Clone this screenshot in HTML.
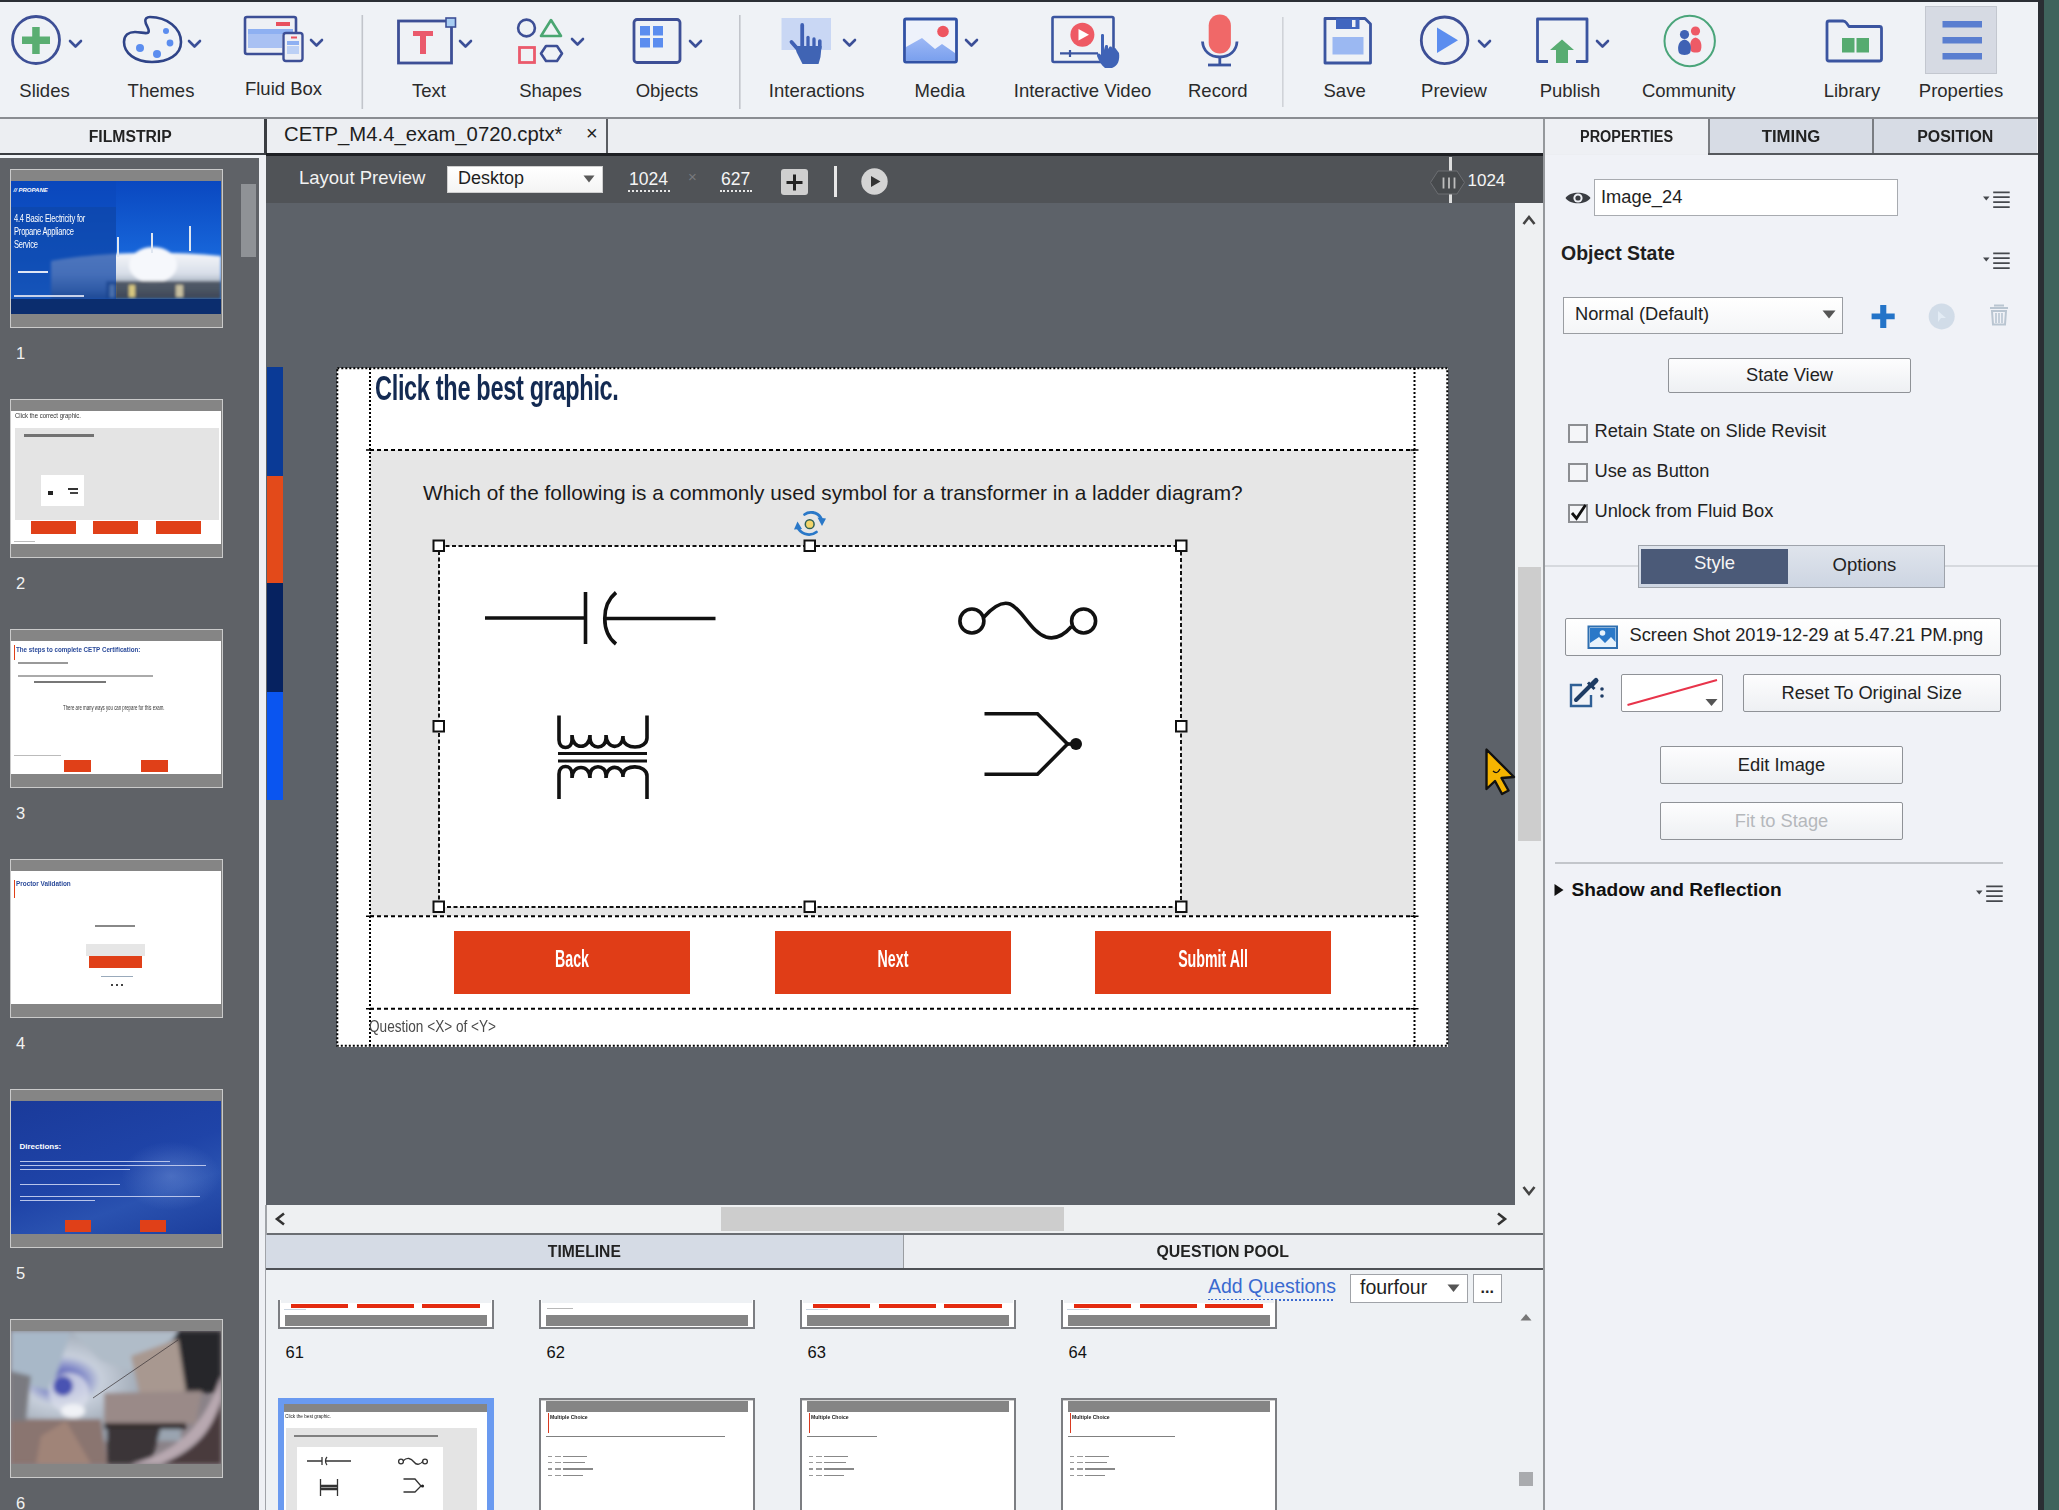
<!DOCTYPE html>
<html><head><meta charset="utf-8">
<style>
*{margin:0;padding:0;box-sizing:border-box}
html,body{width:2059px;height:1510px;overflow:hidden;background:#eff2f6;font-family:"Liberation Sans",sans-serif;color:#222}
.a{position:absolute}
.tl{position:absolute;font-size:18.5px;line-height:1;color:#2a2a2a;white-space:nowrap;transform:translateX(-50%)}
.tab{position:absolute;top:119px;height:35px;font-weight:bold;font-size:16px;color:#222;display:flex;align-items:center;justify-content:center}
.tab span{display:inline-block}
.pt{font-size:18.3px;line-height:1;color:#222;white-space:nowrap}
.btn2{background:linear-gradient(#fdfdfe,#eef0f3);border:1.5px solid #8f9297;border-radius:2px;font-size:18.3px;line-height:1;color:#222;display:flex;align-items:center;justify-content:center;white-space:nowrap}
.cb{width:19.5px;height:19px;border:2px solid #8c8e92;background:#f4f5f8}
</style></head><body>
<!-- top border -->
<div class="a" style="left:0;top:0;width:2059px;height:2px;background:#2b2f35"></div>
<!-- right teal -->
<div class="a" style="left:2038px;top:0;width:6px;height:1510px;background:#2a2e33"></div>
<div class="a" style="left:2044px;top:0;width:15px;height:1510px;background:#3f635c"></div>
<!-- toolbar -->
<div class="a" id="toolbar" style="left:0;top:2px;width:2038px;height:116px;background:#eff2f6"></div>
<div class="a" style="left:0;top:117px;width:2038px;height:2px;background:#8a8d92"></div>
<svg class="a" style="left:0;top:0" width="2038" height="118" viewBox="0 0 2038 118">
<defs>
<linearGradient id="mtn" x1="0" y1="0" x2="0" y2="1"><stop offset="0" stop-color="#9db8f5"/><stop offset="1" stop-color="#7aa0ee"/></linearGradient>
</defs>
<g fill="none" stroke="#3b4f97" stroke-width="2.6" stroke-linecap="round" stroke-linejoin="round">
<!-- chevrons -->
<path d="M70 41 L75.5 46.5 L81 41"/>
<path d="M189 41 L194.5 46.5 L200 41"/>
<path d="M311 40 L316.5 45.5 L322 40"/>
<path d="M460 41 L465.5 46.5 L471 41"/>
<path d="M572 39 L577.5 44.5 L583 39"/>
<path d="M690 41 L695.5 46.5 L701 41"/>
<path d="M844 40 L849.5 45.5 L855 40"/>
<path d="M966 40 L971.5 45.5 L977 40"/>
<path d="M1479 41 L1484.5 46.5 L1490 41"/>
<path d="M1597 41 L1602.5 46.5 L1608 41"/>
</g>
<!-- Slides -->
<circle cx="36" cy="40" r="23.5" fill="none" stroke="#3d4f96" stroke-width="2.8"/>
<rect x="22" y="36.5" width="28" height="7.5" fill="#5aae72"/>
<rect x="32.2" y="27" width="7.5" height="27" fill="#5aae72"/>
<!-- Themes palette -->
<path d="M150 17 C167 17 181 28 181 42 C181 55 168 62 152 62 C135 62 124 53 124 42 C124 35 129 32 135 32 C140 32 144 33.5 147 33 C149.5 32.5 149 30 147.5 27 C146 24 144 21 146 18.5 C147 17.5 148.5 17 150 17 Z" fill="none" stroke="#2f4488" stroke-width="2.6"/>
<circle cx="140" cy="48" r="4" fill="#5b8def"/>
<circle cx="157" cy="54" r="4" fill="#5b8def"/>
<circle cx="170" cy="43" r="3.4" fill="#5b8def"/>
<circle cx="166" cy="31" r="3" fill="#5b8def"/>
<!-- Fluid box -->
<rect x="245" y="17" width="51" height="37" rx="2" fill="#eef0f5" stroke="#3d4f96" stroke-width="2.6"/>
<rect x="248" y="34" width="34" height="14" fill="#a9c1f3"/>
<rect x="248" y="29" width="45" height="5" fill="#8eb0f2"/>
<rect x="276" y="22" width="14" height="4" fill="#e8505e"/>
<rect x="283.5" y="33" width="19" height="28" rx="2.5" fill="#eef0f5" stroke="#3d4f96" stroke-width="2.4"/>
<rect x="287" y="41" width="12" height="4" fill="#8eb0f2"/>
<rect x="287" y="46" width="12" height="8" fill="#bcd0f5"/>
<rect x="291" y="36.5" width="6" height="2" fill="#e8505e"/>
<!-- separators -->
<rect x="361.5" y="15" width="1.6" height="94" fill="#c2c5cb"/>
<rect x="739" y="15" width="1.6" height="94" fill="#c2c5cb"/>
<rect x="1282" y="17" width="1.6" height="90" fill="#d0d3d8"/>
<!-- Text -->
<rect x="398.5" y="21" width="53" height="42" fill="none" stroke="#3d4f96" stroke-width="2.8"/>
<rect x="446" y="18" width="9.5" height="9" fill="#a8cdf2" stroke="#3d4f96" stroke-width="1.6"/>
<path d="M413 31 H433 V36 H426 V54 H420 V36 H413 Z" fill="#ea5a6c"/>
<!-- Shapes -->
<circle cx="526.5" cy="28" r="8.4" fill="none" stroke="#3d4f96" stroke-width="2.6"/>
<path d="M551 20 L561 36 L541 36 Z" fill="none" stroke="#4aa672" stroke-width="2.6" stroke-linejoin="round"/>
<rect x="519.5" y="47.5" width="15" height="15" fill="none" stroke="#ea5a6c" stroke-width="2.8"/>
<path d="M546 46 L557 46 L562 53.5 L557 61 L546 61 L541 53.5 Z" fill="none" stroke="#3d4f96" stroke-width="2.6" stroke-linejoin="round"/>
<!-- Objects -->
<rect x="634" y="19.5" width="46" height="43" rx="3" fill="none" stroke="#3d4f96" stroke-width="2.8"/>
<rect x="640" y="26" width="10" height="9.5" fill="#5b8def"/>
<rect x="653" y="26" width="10" height="9.5" fill="#5b8def"/>
<rect x="640" y="38" width="10" height="9.5" fill="#5b8def"/>
<rect x="653" y="38" width="10" height="9.5" fill="#5b8def"/>
<!-- Interactions -->
<rect x="781.5" y="18" width="49.5" height="32" fill="#c9d7f4"/>
<g stroke="#3f60b4" stroke-linecap="round" fill="none"><path d="M802.2 25 V47" stroke-width="3.8"/><path d="M808 37.5 V47" stroke-width="3.3"/><path d="M814 39 V47" stroke-width="3.3"/><path d="M819.8 41 V48" stroke-width="3.6"/><path d="M791.5 42 L798.5 50" stroke-width="3.8"/></g>
<path d="M795.5 46 H821.6 L820.5 57 L818.5 64 H802.5 L796.5 52 Z" fill="#4064b4"/>
<!-- Media -->
<rect x="904.5" y="19" width="52" height="43" rx="1.5" fill="#eef2fb" stroke="#3152a5" stroke-width="2.8"/>
<path d="M906 60.5 L906 47 L922 38 L935 49 L942 44 L955 53 L955 60.5 Z" fill="url(#mtn)"/>
<circle cx="943" cy="31.5" r="5.8" fill="#ee5560"/>
<!-- Interactive video -->
<rect x="1052.5" y="17" width="61" height="45" rx="1.5" fill="none" stroke="#3b55a0" stroke-width="2.6"/>
<circle cx="1082.4" cy="34.7" r="12" fill="#ee5a64"/>
<path d="M1078.5 29 L1089 34.7 L1078.5 40.4 Z" fill="#fff"/>
<path d="M1060 53.4 H1098" stroke="#3b55a0" stroke-width="2.2"/>
<path d="M1070 50 V57" stroke="#3b55a0" stroke-width="2.2"/>
<path d="M1101 35 C1101 33.5 1104 33.5 1104 35 L1104 50 L1105 46 C1105 44.5 1108 44.5 1108 46 L1108 49 L1109 47.5 C1109 46 1112 46 1112 47.5 L1113 49 C1113 47.5 1116 47.5 1116 49 L1119 53 C1120 60 1118 66 1112 68 L1105 68 C1101 65 1099 61 1097 56 C1097 53 1099 53 1101 55 Z" fill="#3f63b6"/>
<!-- Record -->
<rect x="1208.7" y="14.5" width="22.2" height="39" rx="11" fill="#f06868"/>
<path d="M1202.5 41.5 C1203 51 1210 57 1219.8 57 C1229.6 57 1236.5 51 1237 41.5" fill="none" stroke="#3b55a0" stroke-width="2.8"/>
<path d="M1219.8 57 V64" stroke="#3b55a0" stroke-width="2.8"/>
<path d="M1208 65 H1231" stroke="#3b55a0" stroke-width="2.8"/>
<!-- Save -->
<path d="M1325 18.5 H1365 L1370.5 24 V63 H1325 Z" fill="none" stroke="#3b55a0" stroke-width="2.8" stroke-linejoin="round"/>
<rect x="1336" y="18.5" width="23.5" height="10.5" fill="#4166bf"/>
<rect x="1352" y="20" width="3.5" height="7" fill="#eef0f5"/>
<rect x="1332.5" y="37" width="31" height="17.5" fill="#9bb8f2"/>
<!-- Preview -->
<circle cx="1444.6" cy="40.3" r="23.3" fill="none" stroke="#3d4f96" stroke-width="2.8"/>
<path d="M1437 27.5 L1458 40.3 L1437 53 Z" fill="#5b8def"/>
<!-- Publish -->
<path d="M1548 61.5 H1537.5 V19 H1587 V61.5 H1576" fill="none" stroke="#3b55a0" stroke-width="2.8" stroke-linejoin="round"/>
<path d="M1562 39.5 L1574 50 H1568 V63 H1556 V50 H1550 Z" fill="#58ac72"/>
<!-- Community -->
<circle cx="1689.7" cy="41" r="25.2" fill="none" stroke="#4aa57a" stroke-width="2"/>
<circle cx="1695.5" cy="31" r="4.6" fill="#ee5a66"/>
<path d="M1691 51 C1689.5 46 1689.5 39 1695.5 37.5 C1701.5 39 1702.5 46 1700.5 51 C1699 53 1692.5 53 1691 51 Z" fill="#ee5a66"/>
<circle cx="1684.5" cy="34.5" r="4.6" fill="#3f62b4"/>
<path d="M1679 53 C1677 48 1678 41 1684.5 39.5 C1691 41 1692 48 1690 53 C1688 55.5 1681 55.5 1679 53 Z" fill="#3f62b4"/>
<!-- Library -->
<path d="M1829 61 Q1827 61 1827 59 V23 Q1827 21 1829 21 H1843 Q1845 21 1846.5 23 L1849 26.5 H1879.5 Q1881.5 26.5 1881.5 28.5 V59 Q1881.5 61 1879.5 61 Z" fill="none" stroke="#3b55a0" stroke-width="2.8" stroke-linejoin="round"/>
<path d="M1842 38 H1854.5 V52.5 H1842 Z M1856.5 38 H1869 V52.5 H1856.5 Z" fill="#56ab70"/>
<!-- Properties -->
<rect x="1925.5" y="6.5" width="71" height="67" fill="#d6dae3" stroke="#c3c7cf" stroke-width="1"/>
<rect x="1942.5" y="21" width="39.5" height="6.5" fill="#5a7ed0"/>
<rect x="1942.5" y="37" width="39.5" height="6.5" fill="#5a7ed0"/>
<rect x="1942.5" y="53" width="39.5" height="6.5" fill="#5a7ed0"/>
</svg>
<div class="tl" style="left:44.5px;top:82.3px">Slides</div>
<div class="tl" style="left:161px;top:82.3px">Themes</div>
<div class="tl" style="left:283.5px;top:79.5px">Fluid Box</div>
<div class="tl" style="left:429px;top:82.3px">Text</div>
<div class="tl" style="left:550.5px;top:82.3px">Shapes</div>
<div class="tl" style="left:667px;top:82.3px">Objects</div>
<div class="tl" style="left:816.7px;top:82.3px">Interactions</div>
<div class="tl" style="left:939.8px;top:82.3px">Media</div>
<div class="tl" style="left:1082.5px;top:82.3px">Interactive Video</div>
<div class="tl" style="left:1217.8px;top:82.3px">Record</div>
<div class="tl" style="left:1344.6px;top:82.3px">Save</div>
<div class="tl" style="left:1454px;top:82.3px">Preview</div>
<div class="tl" style="left:1570px;top:82.3px">Publish</div>
<div class="tl" style="left:1688.7px;top:82.3px">Community</div>
<div class="tl" style="left:1852px;top:82.3px">Library</div>
<div class="tl" style="left:1961px;top:82.3px">Properties</div>


<!-- tab bar -->
<div class="a" style="left:0;top:119px;width:2038px;height:36px;background:#eceef2"></div>
<div class="tab" style="left:0;width:261px"><span style="transform:scaleX(0.983)">FILMSTRIP</span></div>
<div class="a" style="left:264px;top:119px;width:3px;height:37px;background:#3a3d42"></div>
<div class="a" style="left:266px;top:119px;width:342px;height:36px;border-right:2px solid #5a5d62"></div>
<div class="a" style="left:284px;top:123px;font-size:20.3px;color:#1e1e1e;white-space:nowrap">CETP_M4.4_exam_0720.cptx*</div>
<div class="a" style="left:586px;top:122px;font-size:20px;color:#1e1e1e">×</div>
<div class="a" style="left:0;top:153px;width:266px;height:1.8px;background:#3a3d42"></div>
<div class="a" style="left:266px;top:153px;width:1278px;height:3px;background:#1e2024"></div>
<div class="a" style="left:1543px;top:119px;width:2px;height:1391px;background:#95989c"></div>
<div class="tab" style="left:1545px;width:163px;background:#eef0f4"><span style="transform:scaleX(0.902)">PROPERTIES</span></div>
<div class="tab" style="left:1708px;width:164px;background:#d7dce5;border-left:2px solid #7a7d82"><span style="transform:scaleX(1.046)">TIMING</span></div>
<div class="tab" style="left:1872px;width:165px;background:#d7dce5;border-left:2px solid #7a7d82"><span style="transform:scaleX(0.995)">POSITION</span></div>
<div class="a" style="left:1708px;top:153px;width:330px;height:2px;background:#55585d"></div>

<!-- filmstrip -->
<div class="a" id="film" style="left:0;top:157.5px;width:259px;height:1353px;background:#5f6267"></div>
<div class="a" style="left:259px;top:155px;width:7px;height:1355px;background:#eef0f4"></div>
<!--FILM--><div class="a" style="left:9.5px;top:169px;width:213px;height:159px;border:1.5px solid #cacaca;background:#858585;overflow:hidden">
<div class="a" style="left:0;top:11px;width:210px;height:133px;overflow:hidden"><svg class="a" style="left:0;top:0" width="210" height="133" viewBox="0 0 210 133">
<defs><filter id="bl1"><feGaussianBlur stdDeviation="1.6"/></filter>
<linearGradient id="sky1" x1="0" y1="0" x2="0" y2="1"><stop offset="0" stop-color="#0a48c0"/><stop offset="0.6" stop-color="#1868dc"/><stop offset="1" stop-color="#3a88ee"/></linearGradient>
<linearGradient id="tank1" x1="0" y1="0" x2="0" y2="1"><stop offset="0" stop-color="#f4f6fa"/><stop offset="0.45" stop-color="#d8dee8"/><stop offset="0.8" stop-color="#8a96a8"/><stop offset="1" stop-color="#4a5464"/></linearGradient></defs>
<rect width="210" height="133" fill="url(#sky1)"/>
<g filter="url(#bl1)">
<path d="M40 80 C70 74 140 68 210 75 V118 H40 Z" fill="url(#tank1)"/>
<ellipse cx="142" cy="84" rx="24" ry="18" fill="#f6f8fc"/>
<path d="M95 100 H210 V118 H95 Z" fill="#3a4250" opacity="0.8"/>
<rect x="118" y="104" width="6" height="12" fill="#d8c880"/><rect x="165" y="104" width="7" height="12" fill="#c8c0a0"/>
<rect x="99" y="104" width="4" height="12" fill="#f0e8c0"/>
</g>
<rect x="0" y="26" width="105" height="92" fill="#0d44a6" opacity="0.72"/>
<rect x="0" y="0" width="105" height="26" fill="#0a46b8" opacity="0.5"/>
<rect x="0" y="118" width="210" height="15" fill="#0b2d6e"/>
<rect x="106" y="56" width="2" height="20" fill="#dfe6f0"/><rect x="140" y="52" width="2" height="20" fill="#dfe6f0"/><rect x="178" y="45" width="2" height="25" fill="#dfe6f0"/>
</svg><div class="a" style="left:3px;top:6px;font-size:6px;line-height:1;color:#fff;white-space:nowrap;font-weight:bold;font-style:italic"><b>//</b> PROPANE</div><div class="a" style="left:3px;top:32px;font-size:10.5px;line-height:1;color:#fff;white-space:nowrap;transform:scaleX(0.72);transform-origin:0 0;letter-spacing:-0.3px">4.4 Basic Electricity for</div><div class="a" style="left:3px;top:45px;font-size:10.5px;line-height:1;color:#fff;white-space:nowrap;transform:scaleX(0.72);transform-origin:0 0;letter-spacing:-0.3px">Propane Appliance</div><div class="a" style="left:3px;top:58px;font-size:10.5px;line-height:1;color:#fff;white-space:nowrap;transform:scaleX(0.72);transform-origin:0 0;letter-spacing:-0.3px">Service</div><div class="a" style="left:7px;top:90px;width:30px;height:1.5px;background:#dfe6f5;"></div><div class="a" style="left:3px;top:114px;width:70px;height:1.5px;background:#c8d2ea;"></div></div></div><div class="a" style="left:16px;top:344.5px;font-size:16.5px;line-height:1;color:#f2f2f2">1</div><div class="a" style="left:9.5px;top:399px;width:213px;height:159px;border:1.5px solid #cacaca;background:#858585;overflow:hidden">
<div class="a" style="left:0;top:11px;width:210px;height:133px;overflow:hidden"><div class="a" style="left:0px;top:0px;width:210px;height:133px;background:#fff;"></div><div class="a" style="left:4px;top:1px;font-size:7.5px;line-height:1;color:#333;white-space:nowrap;transform:scaleX(0.8);transform-origin:0 0">Click the correct graphic.</div><div class="a" style="left:4px;top:16.5px;width:204px;height:92px;background:#e4e4e4;"></div><div class="a" style="left:13px;top:23px;width:70px;height:3px;background:#555;opacity:0.8"></div><div class="a" style="left:30.7px;top:63.5px;width:43px;height:31px;background:#fff;"></div><div class="a" style="left:37px;top:80px;width:5px;height:4px;background:#222;"></div><div class="a" style="left:57px;top:77px;width:10px;height:2px;background:#333;"></div><div class="a" style="left:59px;top:81px;width:8px;height:2px;background:#444;"></div><div class="a" style="left:20px;top:110px;width:45px;height:12.5px;background:#e04018;"></div><div class="a" style="left:82.3px;top:110px;width:45px;height:12.5px;background:#e04018;"></div><div class="a" style="left:145px;top:110px;width:45px;height:12.5px;background:#e04018;"></div><div class="a" style="left:3px;top:130px;width:21px;height:1px;background:#bbb;"></div></div></div><div class="a" style="left:16px;top:574.5px;font-size:16.5px;line-height:1;color:#f2f2f2">2</div><div class="a" style="left:9.5px;top:629px;width:213px;height:159px;border:1.5px solid #cacaca;background:#858585;overflow:hidden">
<div class="a" style="left:0;top:11px;width:210px;height:133px;overflow:hidden"><div class="a" style="left:0px;top:0px;width:210px;height:133px;background:#fff;"></div><div class="a" style="left:3px;top:3.5px;width:1.5px;height:15px;background:#e04018;"></div><div class="a" style="left:5px;top:5px;font-size:8px;line-height:1;color:#2a4a9a;white-space:nowrap;transform:scaleX(0.78);transform-origin:0 0;font-weight:bold">The steps to complete CETP Certification:</div><div class="a" style="left:7px;top:21px;width:50px;height:1.6px;background:#999;"></div><div class="a" style="left:7px;top:34px;width:135px;height:1.6px;background:#aaa;"></div><div class="a" style="left:23px;top:40px;width:72px;height:1.6px;background:#777;"></div><div class="a" style="left:52px;top:63px;font-size:7px;line-height:1;color:#333;white-space:nowrap;transform:scaleX(0.62);transform-origin:0 0">There are many ways you can prepare for this exam.</div><div class="a" style="left:3px;top:114px;width:47px;height:1px;background:#bbb;"></div><div class="a" style="left:53px;top:119px;width:27px;height:12px;background:#e04018;"></div><div class="a" style="left:130px;top:119px;width:27px;height:12px;background:#e04018;"></div></div></div><div class="a" style="left:16px;top:804.5px;font-size:16.5px;line-height:1;color:#f2f2f2">3</div><div class="a" style="left:9.5px;top:859px;width:213px;height:159px;border:1.5px solid #cacaca;background:#858585;overflow:hidden">
<div class="a" style="left:0;top:11px;width:210px;height:133px;overflow:hidden"><div class="a" style="left:0px;top:0px;width:210px;height:133px;background:#fff;"></div><div class="a" style="left:3px;top:8.5px;width:1.5px;height:18px;background:#e04018;"></div><div class="a" style="left:5px;top:9px;font-size:8px;line-height:1;color:#2a4a9a;white-space:nowrap;transform:scaleX(0.8);transform-origin:0 0;font-weight:bold">Proctor Validation</div><div class="a" style="left:84px;top:54px;width:40px;height:1.6px;background:#888;"></div><div class="a" style="left:75.4px;top:72.5px;width:59.6px;height:12px;background:#e6e6e6;"></div><div class="a" style="left:78.4px;top:85px;width:53px;height:11.5px;background:#e04018;"></div><div class="a" style="left:90px;top:104.5px;width:32px;height:1px;background:#9ab;"></div><div class="a" style="left:100px;top:113px;width:2px;height:2px;background:#444;"></div><div class="a" style="left:105px;top:113px;width:2px;height:2px;background:#444;"></div><div class="a" style="left:110px;top:113px;width:2px;height:2px;background:#444;"></div></div></div><div class="a" style="left:16px;top:1034.5px;font-size:16.5px;line-height:1;color:#f2f2f2">4</div><div class="a" style="left:9.5px;top:1089px;width:213px;height:159px;border:1.5px solid #cacaca;background:#858585;overflow:hidden">
<div class="a" style="left:0;top:11px;width:210px;height:133px;overflow:hidden"><div class="a" style="left:0px;top:0px;width:210px;height:133px;background:linear-gradient(160deg,#1a3a9a 0%,#1f44a8 50%,#2a52b0 70%,#1c3e9c 100%);"></div><div class="a" style="left:110px;top:40px;width:100px;height:70px;background:radial-gradient(ellipse at 50% 50%,rgba(140,170,230,0.35),transparent 70%);"></div><div class="a" style="left:9px;top:42px;font-size:8px;line-height:1;color:#fff;white-space:nowrap;"><b>Directions:</b></div><div class="a" style="left:9px;top:60px;width:150px;height:1.4px;background:#b8c4ea;"></div><div class="a" style="left:9px;top:64px;width:186px;height:1.4px;background:#b8c4ea;"></div><div class="a" style="left:9px;top:68px;width:110px;height:1.4px;background:#b8c4ea;"></div><div class="a" style="left:9px;top:83px;width:100px;height:1.4px;background:#b8c4ea;"></div><div class="a" style="left:9px;top:95px;width:180px;height:1.4px;background:#b8c4ea;"></div><div class="a" style="left:9px;top:99px;width:75px;height:1.4px;background:#b8c4ea;"></div><div class="a" style="left:54px;top:119px;width:26px;height:12px;background:#e04018;"></div><div class="a" style="left:129px;top:119px;width:26px;height:12px;background:#e04018;"></div></div></div><div class="a" style="left:16px;top:1264.5px;font-size:16.5px;line-height:1;color:#f2f2f2">5</div><div class="a" style="left:9.5px;top:1319px;width:213px;height:159px;border:1.5px solid #cacaca;background:#858585;overflow:hidden">
<div class="a" style="left:0;top:11px;width:210px;height:133px;overflow:hidden"><svg class="a" style="left:0;top:0" width="210" height="133" viewBox="0 0 210 133">
<defs><filter id="bl6" x="-10%" y="-10%" width="120%" height="120%"><feGaussianBlur stdDeviation="2.2"/></filter>
<radialGradient id="sw6" cx="0.3" cy="0.45" r="0.5"><stop offset="0" stop-color="#4a50b0"/><stop offset="0.25" stop-color="#8088c8"/><stop offset="0.45" stop-color="#c8d0dc"/><stop offset="1" stop-color="#9aa4b0"/></radialGradient></defs>
<rect width="210" height="133" fill="#8a8288"/>
<g filter="url(#bl6)">
<rect x="0" y="0" width="170" height="110" fill="url(#sw6)"/>
<path d="M0 0 H60 L40 60 L0 50 Z" fill="#a8b8c8"/>
<path d="M60 0 H170 L120 40 L90 30 Z" fill="#b0bcc8"/>
<circle cx="58" cy="62" r="20" fill="#d8dce8" opacity="0.8"/>
<circle cx="52" cy="55" r="10" fill="#4a52b2"/>
<ellipse cx="62" cy="80" rx="12" ry="7" fill="#f0f2f6"/>
<path d="M167 0 H210 V62 L160 62 L150 30 Z" fill="#26262c"/>
<path d="M120 25 L167 8 L175 60 L130 70 Z" fill="#a89890"/>
<path d="M93 62 L191 60 L185 93 L93 93 Z" fill="#9a8a88"/>
<path d="M93 92 H175 V98 H93 Z" fill="#2a2022"/>
<path d="M96 96 H150 L140 133 H96 Z" fill="#3a3438"/>
<path d="M210 45 C195 90 170 120 120 133 H150 C185 118 205 95 210 70 Z" fill="#b8a8b0"/>
<path d="M210 70 C200 100 185 120 150 133 H210 Z" fill="#4a3a3c"/>
<path d="M0 88 H90 L96 133 H0 Z" fill="#8a7470"/>
<path d="M30 105 L55 90 L80 133 H25 Z" fill="#a08478"/>
<path d="M0 40 L20 45 L15 90 L0 90 Z" fill="#7a7a80"/>
</g>
<path d="M82 67 L167 9" stroke="#3a3436" stroke-width="0.9" fill="none" opacity="0.8"/>
</svg></div></div><div class="a" style="left:16px;top:1494.5px;font-size:16.5px;line-height:1;color:#f2f2f2">6</div><div class="a" style="left:240.5px;top:184px;width:15.5px;height:73px;background:#8f9296"></div><!--/FILM-->

<!-- canvas -->
<div class="a" id="canvas" style="left:266px;top:156px;width:1250px;height:1049px;background:#5d6269"></div>
<div class="a" id="layoutbar" style="left:266px;top:156px;width:1277px;height:47px;background:#505357"></div>
<div class="a" id="vscroll" style="left:1515px;top:203px;width:28px;height:1002px;background:#eef0f2"></div>
<div class="a" id="hscroll" style="left:266px;top:1205px;width:1277px;height:29px;background:#eef0f2"></div>
<!-- layout bar content -->
<div class="a" style="left:299px;top:169px;font-size:18.5px;line-height:1;color:#f2f2f2;white-space:nowrap">Layout Preview</div>
<div class="a" style="left:447px;top:166px;width:156px;height:27px;background:linear-gradient(#ffffff,#f4f4f4);border:1px solid #cfcfcf"></div>
<div class="a" style="left:458px;top:168.5px;font-size:18px;line-height:1;color:#1e1e1e">Desktop</div>
<svg class="a" style="left:583px;top:175px" width="12" height="8"><path d="M0.5 0.5 H11.5 L6 7.5 Z" fill="#5a5a5a"/></svg>
<div class="a" style="left:629px;top:170.5px;font-size:17.5px;line-height:1;color:#f5f5f5">1024</div>
<div class="a" style="left:628px;top:190px;width:42px;border-top:2px dotted #e6e6e6"></div>
<div class="a" style="left:688px;top:169px;font-size:15px;line-height:1;color:#787a7e">×</div>
<div class="a" style="left:721px;top:170.5px;font-size:17.5px;line-height:1;color:#f5f5f5">627</div>
<div class="a" style="left:720px;top:190px;width:32px;border-top:2px dotted #e6e6e6"></div>
<div class="a" style="left:781px;top:168.5px;width:27px;height:26.5px;background:#cfcfcf;border-radius:3px"></div>
<svg class="a" style="left:781px;top:168.5px" width="27" height="27"><path d="M5.5 13.5 H21.5 M13.5 5.5 V21.5" stroke="#222" stroke-width="3"/></svg>
<div class="a" style="left:834px;top:165.5px;width:2.5px;height:31px;background:#e8e8e8"></div>
<svg class="a" style="left:861px;top:168px" width="28" height="28"><circle cx="13.5" cy="13.5" r="13.2" fill="#d4d4d4"/><path d="M10 8 L19.5 13.5 L10 19 Z" fill="#333"/></svg>
<div class="a" style="left:1448.8px;top:156.5px;width:2.8px;height:46.5px;background:#dedede"></div>
<svg class="a" style="left:1429px;top:170px" width="38" height="26"><path d="M1.5 12.5 L9 1 H28 L35.5 12.5 L28 24 H9 Z" fill="#474a4d" stroke="#6c6e72" stroke-width="1"/><path d="M14.5 7.5 V18.5 M20 7.5 V18.5 M25.5 7.5 V18.5" stroke="#bdbdbd" stroke-width="1.8"/></svg>
<div class="a" style="left:1467.5px;top:171.5px;font-size:17px;line-height:1;color:#f5f5f5">1024</div>
<!-- v scrollbar -->
<svg class="a" style="left:1522px;top:214px" width="14" height="12"><path d="M1.5 10 L7 3 L12.5 10" fill="none" stroke="#444" stroke-width="2.6"/></svg>
<div class="a" style="left:1517.5px;top:567px;width:23.5px;height:273.5px;background:#cdcdcd"></div>
<svg class="a" style="left:1522px;top:1185px" width="14" height="12"><path d="M1.5 2 L7 9 L12.5 2" fill="none" stroke="#444" stroke-width="2.6"/></svg>
<!-- h scrollbar -->
<svg class="a" style="left:274px;top:1212px" width="12" height="14"><path d="M10 1.5 L3 7 L10 12.5" fill="none" stroke="#333" stroke-width="2.6"/></svg>
<div class="a" style="left:720.5px;top:1206.5px;width:343px;height:24px;background:#cdcdcd"></div>
<svg class="a" style="left:1496px;top:1212px" width="12" height="14"><path d="M2 1.5 L9 7 L2 12.5" fill="none" stroke="#333" stroke-width="2.6"/></svg>
<!-- color stripe -->
<div class="a" style="left:266.5px;top:367px;width:16px;height:109px;background:#0a3a96"></div>
<div class="a" style="left:266.5px;top:476px;width:16px;height:107px;background:#e34a1a"></div>
<div class="a" style="left:266.5px;top:583px;width:16px;height:109px;background:#062260"></div>
<div class="a" style="left:266.5px;top:692px;width:16px;height:108px;background:#0a55f0"></div>
<!-- slide -->
<div class="a" style="left:336.5px;top:367.5px;width:1111px;height:679px;background:#fff"></div>
<div class="a" style="left:370px;top:450px;width:1044px;height:466px;background:#e6e6e6"></div>
<svg class="a" style="left:0;top:0" width="1516" height="1205" viewBox="0 0 1516 1205">
<g fill="none" stroke="#000" stroke-width="2" stroke-dasharray="2 2">
<rect x="337.3" y="368.3" width="1110" height="677.5"/>
<path d="M370 368 V1046 M1414.5 368 V1046"/>
<path d="M370 450 H1414.5 M370 916.3 H1414.5 M370 1008.8 H1414.5" stroke-dasharray="4 3"/>
</g>
<g stroke="#000" stroke-width="1.6"><path d="M366 450 H374 M366 916.3 H374 M366 1008.8 H374 M1410.5 450 H1418.5 M1410.5 916.3 H1418.5 M1410.5 1008.8 H1418.5"/></g>
</svg>
<div class="a" id="title" style="left:375px;top:370.3px;font-size:35px;line-height:1;color:#132a52;font-weight:bold;white-space:nowrap;transform:scaleX(0.673);transform-origin:0 0;letter-spacing:-0.5px">Click the best graphic.</div>
<div class="a" id="q" style="left:423px;top:482.5px;font-size:20.83px;line-height:1;color:#1a1a1a;white-space:nowrap">Which of the following is a commonly used symbol for a transformer in a ladder diagram?</div>
<!-- image selection -->
<div class="a" style="left:439px;top:546px;width:742px;height:361px;background:#fff"></div>
<svg class="a" style="left:0;top:0" width="1516" height="1205" viewBox="0 0 1516 1205">
<rect x="439" y="546" width="742" height="361" fill="none" stroke="#111" stroke-width="2" stroke-dasharray="4 2.5"/>
<g fill="#fff" stroke="#111" stroke-width="2">
<rect x="433.5" y="540.5" width="10.5" height="10.5"/><rect x="804.5" y="540.5" width="10.5" height="10.5"/><rect x="1176" y="540.5" width="10.5" height="10.5"/>
<rect x="433.5" y="721" width="10.5" height="10.5"/><rect x="1176" y="721" width="10.5" height="10.5"/>
<rect x="433.5" y="901.5" width="10.5" height="10.5"/><rect x="804.5" y="901.5" width="10.5" height="10.5"/><rect x="1176" y="901.5" width="10.5" height="10.5"/>
</g>
<!-- symbols -->
<g fill="none" stroke="#111" stroke-width="3.6">
<path d="M485 618 H585.5 M585.5 592 V644 M616 592.5 C601 605 601 632 616 644 M605.5 618.5 H715.5"/>
<circle cx="971.9" cy="621" r="12"/><circle cx="1083.6" cy="621" r="12"/>
<path d="M984 617 C992 608 1002 601 1010 604 C1022 609 1031 632 1046 637 C1056 640 1065 634 1071.5 626.5"/>
<path d="M559 715.5 V740 C559 750 572 750 572 740 V735 C572 750 590 750 590 735 V738 C590 750 606 750 606 738 V735 C606 750 623 750 623 736 V738 C623 750 647 750 647 738 V715.5"/>
<path d="M558 753.5 H647 M558 761 H647" stroke-width="3"/>
<path d="M559 799 V774 C559 764 572 764 572 774 V778 C572 764 590 764 590 778 V775 C590 764 606 764 606 775 V778 C606 764 623 764 623 777 V775 C623 764 647 764 647 776 V799"/>
<path d="M984.5 713.7 H1037.5 L1067.5 744 L1037.5 774.3 H984.5"/>
</g>
<circle cx="1076" cy="744" r="6" fill="#111"/>
<path d="M1067 744 H1076" stroke="#111" stroke-width="3.6"/>
<!-- rotate icon -->
<g fill="none" stroke="#2a78c8" stroke-width="2.8" stroke-linecap="round">
<path d="M804.5 514.5 C809 511 817 511.5 821 518"/>
<path d="M816.5 532 C811.5 536 803 535.5 798.5 529"/>
</g>
<path d="M817.5 517.5 L826 518.5 L822 526 Z M794 529.5 L802 529 L797.5 521.5 Z" fill="#2a78c8"/>
<circle cx="809.7" cy="524.2" r="4.4" fill="#f3d56a" stroke="#2d5f55" stroke-width="1.5"/>
</svg>
<!-- buttons -->
<div class="a btn" style="left:453.8px;top:931.3px;width:236px;height:63.2px;background:#e03d17"></div>
<div class="a btn" style="left:774.5px;top:931.3px;width:236px;height:63.2px;background:#e03d17"></div>
<div class="a btn" style="left:1095px;top:931.3px;width:236px;height:63.2px;background:#e03d17"></div>
<div class="a" style="left:453.8px;top:948.3px;width:236px;text-align:center;font-size:23.3px;line-height:1;color:#fff;font-weight:bold;transform:scaleX(0.61);transform-origin:50% 0">Back</div>
<div class="a" style="left:774.5px;top:948.3px;width:236px;text-align:center;font-size:23.3px;line-height:1;color:#fff;font-weight:bold;transform:scaleX(0.61);transform-origin:50% 0">Next</div>
<div class="a" style="left:1095px;top:948.3px;width:236px;text-align:center;font-size:23.3px;line-height:1;color:#fff;font-weight:bold;transform:scaleX(0.61);transform-origin:50% 0">Submit All</div>
<div class="a" style="left:369px;top:1019px;font-size:16px;line-height:1;color:#4a4a4a;white-space:nowrap;transform:scaleX(0.85);transform-origin:0 0">Question &lt;X&gt; of &lt;Y&gt;</div>
<!-- cursor -->
<svg class="a" style="left:1480px;top:745px" width="40" height="55"><path d="M6.5 4.5 L6.5 44 L15 36 L22 49 L28.5 45.5 L21.5 33 L34 32 Z" fill="#f5b400" stroke="#111" stroke-width="2.4" stroke-linejoin="round"/><path d="M13 26 Q17 30 20 24" fill="none" stroke="#111" stroke-width="1.3"/></svg>


<!-- bottom tabs -->
<div class="a" style="left:266px;top:1233px;width:1277px;height:2px;background:#6a6d72"></div><div class="a" style="left:265px;top:1205px;width:1.5px;height:305px;background:#a0a3a8"></div>
<div class="a" style="left:266px;top:1235px;width:637px;height:34px;background:#d5dbe5"></div>
<div class="a" style="left:903px;top:1235px;width:640px;height:34px;background:#eceef2;border-left:1px solid #9a9da2"></div>
<div class="a" style="left:266px;top:1268px;width:1277px;height:2px;background:#4e5156"></div>
<div class="tab" style="left:266px;top:1235px;height:34px;width:637px;font-size:16px"><span style="transform:scaleX(0.977)">TIMELINE</span></div>
<div class="tab" style="left:903px;top:1235px;height:34px;width:640px;font-size:16px"><span style="transform:scaleX(0.993)">QUESTION POOL</span></div>
<div class="a" id="qpool" style="left:266px;top:1270px;width:1277px;height:240px;background:#eef1f4"></div>
<!--QP--><div class="a" style="left:1208px;top:1277px;font-size:19.5px;line-height:1;color:#3a6ad0;white-space:nowrap;">Add Questions</div><div class="a" style="left:1208px;top:1298.5px;width:125px;border-top:2px dotted #3a6ad0"></div><div class="a" style="left:1349.5px;top:1274px;width:118.5px;height:29px;background:#fff;border:1.5px solid #a0a3a8"></div><div class="a" style="left:1360px;top:1278px;font-size:19.5px;line-height:1;color:#222;white-space:nowrap;">fourfour</div><svg class="a" style="left:1447px;top:1284px" width="13" height="9"><path d="M0.5 0.5 H12.5 L6.5 8 Z" fill="#555"/></svg><div class="a" style="left:1473px;top:1274px;width:28.5px;height:29px;background:#fff;border:1.5px solid #a0a3a8"></div><div class="a" style="left:1473px;top:1280px;width:28.5px;text-align:center;font-size:16px;line-height:1;color:#222;font-weight:bold">...</div><svg class="a" style="left:1520px;top:1313px" width="12" height="8"><path d="M0.5 7.5 H11.5 L6 1 Z" fill="#777"/></svg><div class="a" style="left:1518.6px;top:1471.5px;width:14.5px;height:14.5px;background:#a9abae;"></div><div class="a" style="left:277.5px;top:1300px;width:216px;height:29px;border:2px solid #7c7e82;border-top:none;background:#fff;overflow:hidden"><div class="a" style="left:5px;top:14.5px;width:202px;height:11px;background:#858585;"></div><div class="a" style="left:11px;top:3.5px;width:57.5px;height:4px;background:#e42b10;"></div><div class="a" style="left:77px;top:3.5px;width:57.5px;height:4px;background:#e42b10;"></div><div class="a" style="left:142.5px;top:3.5px;width:57.5px;height:4px;background:#e42b10;"></div><div class="a" style="left:4px;top:8.5px;width:22px;height:1px;background:#c9d4e0;"></div></div><div class="a" style="left:280.5px;top:1300px;width:210px;height:3px;background:#eef1f4;"></div><div class="a" style="left:285.5px;top:1344px;font-size:16.5px;line-height:1;color:#111;white-space:nowrap;">61</div><div class="a" style="left:538.5px;top:1300px;width:216px;height:29px;border:2px solid #7c7e82;border-top:none;background:#fff;overflow:hidden"><div class="a" style="left:5px;top:14.5px;width:202px;height:11px;background:#858585;"></div><div class="a" style="left:6px;top:8px;width:26px;height:1.2px;background:#b8b8b8;"></div></div><div class="a" style="left:541.5px;top:1300px;width:210px;height:3px;background:#eef1f4;"></div><div class="a" style="left:546.5px;top:1344px;font-size:16.5px;line-height:1;color:#111;white-space:nowrap;">62</div><div class="a" style="left:799.5px;top:1300px;width:216px;height:29px;border:2px solid #7c7e82;border-top:none;background:#fff;overflow:hidden"><div class="a" style="left:5px;top:14.5px;width:202px;height:11px;background:#858585;"></div><div class="a" style="left:11px;top:3.5px;width:57.5px;height:4px;background:#e42b10;"></div><div class="a" style="left:77px;top:3.5px;width:57.5px;height:4px;background:#e42b10;"></div><div class="a" style="left:142.5px;top:3.5px;width:57.5px;height:4px;background:#e42b10;"></div><div class="a" style="left:4px;top:8.5px;width:22px;height:1px;background:#c9d4e0;"></div></div><div class="a" style="left:802.5px;top:1300px;width:210px;height:3px;background:#eef1f4;"></div><div class="a" style="left:807.5px;top:1344px;font-size:16.5px;line-height:1;color:#111;white-space:nowrap;">63</div><div class="a" style="left:1060.5px;top:1300px;width:216px;height:29px;border:2px solid #7c7e82;border-top:none;background:#fff;overflow:hidden"><div class="a" style="left:5px;top:14.5px;width:202px;height:11px;background:#858585;"></div><div class="a" style="left:11px;top:3.5px;width:57.5px;height:4px;background:#e42b10;"></div><div class="a" style="left:77px;top:3.5px;width:57.5px;height:4px;background:#e42b10;"></div><div class="a" style="left:142.5px;top:3.5px;width:57.5px;height:4px;background:#e42b10;"></div><div class="a" style="left:4px;top:8.5px;width:22px;height:1px;background:#c9d4e0;"></div></div><div class="a" style="left:1063.5px;top:1300px;width:210px;height:3px;background:#eef1f4;"></div><div class="a" style="left:1068.5px;top:1344px;font-size:16.5px;line-height:1;color:#111;white-space:nowrap;">64</div><div class="a" style="left:277.5px;top:1397.7px;width:216px;height:120px;background:#6a9af0;overflow:hidden"><div class="a" style="left:6px;top:6.5px;width:203px;height:7.5px;background:#858585;"></div><div class="a" style="left:6px;top:14px;width:203px;height:110px;background:#fff;"></div><div class="a" style="left:7px;top:16.5px;font-size:5.5px;line-height:1;color:#222;white-space:nowrap;transform:scaleX(0.85);transform-origin:0 0">Click the best graphic.</div><div class="a" style="left:8px;top:30.5px;width:191px;height:90px;background:#e4e4e4;"></div><div class="a" style="left:16px;top:37.5px;width:144px;height:1.8px;background:#666;opacity:0.8"></div><div class="a" style="left:19px;top:49.5px;width:146px;height:80px;background:#fff;"></div><svg class="a" style="left:0;top:0" width="216" height="120"><g fill="none" stroke="#333" stroke-width="1.3">
<path d="M29 63 H44 M44 59 V67 M49 59 C47 61 47 65 49 67 M48 63 H73"/>
<circle cx="123" cy="63.5" r="2.4"/><circle cx="147" cy="63.5" r="2.4"/><path d="M125 63 C129 59 133 60 136 64 C139 68 143 66 145 63"/>
<path d="M125.5 81 H137 L143 88 L137 94 H125.5"/>
<path d="M42.5 81 V98 M59.5 81 V98" /><path d="M43 88 H59 M43 91 H59" stroke-width="2.6"/></g>
<circle cx="144.5" cy="88" r="1.6" fill="#222"/></svg></div><div class="a" style="left:538.5px;top:1397.7px;width:216px;height:120px;border:2px solid #7c7e82;background:#fff;overflow:hidden"><div class="a" style="left:0px;top:0px;width:212px;height:1.2px;background:#d0d0d0;"></div><div class="a" style="left:5px;top:1.5px;width:202px;height:11px;background:#858585;"></div><div class="a" style="left:7px;top:13px;width:1.6px;height:20px;background:#d83a20;"></div><div class="a" style="left:9.5px;top:14.5px;font-size:6px;line-height:1;color:#222;white-space:nowrap;transform:scaleX(0.85);transform-origin:0 0"><b>Multiple Choice</b></div><div class="a" style="left:5.2999999999999545px;top:36px;width:179.70000000000005px;height:1.5px;background:#555;opacity:0.75"></div><div class="a" style="left:7px;top:56.0px;width:4px;height:1.2px;background:#999;"></div><div class="a" style="left:14px;top:56.0px;width:6px;height:1.2px;background:#999;"></div><div class="a" style="left:22px;top:56.0px;width:24px;height:1.2px;background:#888;"></div><div class="a" style="left:7px;top:62.4px;width:4px;height:1.2px;background:#999;"></div><div class="a" style="left:14px;top:62.4px;width:6px;height:1.2px;background:#999;"></div><div class="a" style="left:22px;top:62.4px;width:22px;height:1.2px;background:#888;"></div><div class="a" style="left:7px;top:68.8px;width:4px;height:1.2px;background:#999;"></div><div class="a" style="left:14px;top:68.8px;width:6px;height:1.2px;background:#999;"></div><div class="a" style="left:22px;top:68.8px;width:30px;height:1.2px;background:#888;"></div><div class="a" style="left:7px;top:75.2px;width:4px;height:1.2px;background:#999;"></div><div class="a" style="left:14px;top:75.2px;width:6px;height:1.2px;background:#999;"></div><div class="a" style="left:22px;top:75.2px;width:20px;height:1.2px;background:#888;"></div></div><div class="a" style="left:799.5px;top:1397.7px;width:216px;height:120px;border:2px solid #7c7e82;background:#fff;overflow:hidden"><div class="a" style="left:0px;top:0px;width:212px;height:1.2px;background:#d0d0d0;"></div><div class="a" style="left:5px;top:1.5px;width:202px;height:11px;background:#858585;"></div><div class="a" style="left:7px;top:13px;width:1.6px;height:20px;background:#d83a20;"></div><div class="a" style="left:9.5px;top:14.5px;font-size:6px;line-height:1;color:#222;white-space:nowrap;transform:scaleX(0.85);transform-origin:0 0"><b>Multiple Choice</b></div><div class="a" style="left:5.2999999999999545px;top:36px;width:70.5px;height:1.5px;background:#555;opacity:0.75"></div><div class="a" style="left:7px;top:56.0px;width:4px;height:1.2px;background:#999;"></div><div class="a" style="left:14px;top:56.0px;width:6px;height:1.2px;background:#999;"></div><div class="a" style="left:22px;top:56.0px;width:24px;height:1.2px;background:#888;"></div><div class="a" style="left:7px;top:62.4px;width:4px;height:1.2px;background:#999;"></div><div class="a" style="left:14px;top:62.4px;width:6px;height:1.2px;background:#999;"></div><div class="a" style="left:22px;top:62.4px;width:22px;height:1.2px;background:#888;"></div><div class="a" style="left:7px;top:68.8px;width:4px;height:1.2px;background:#999;"></div><div class="a" style="left:14px;top:68.8px;width:6px;height:1.2px;background:#999;"></div><div class="a" style="left:22px;top:68.8px;width:30px;height:1.2px;background:#888;"></div><div class="a" style="left:7px;top:75.2px;width:4px;height:1.2px;background:#999;"></div><div class="a" style="left:14px;top:75.2px;width:6px;height:1.2px;background:#999;"></div><div class="a" style="left:22px;top:75.2px;width:20px;height:1.2px;background:#888;"></div></div><div class="a" style="left:1060.5px;top:1397.7px;width:216px;height:120px;border:2px solid #7c7e82;background:#fff;overflow:hidden"><div class="a" style="left:0px;top:0px;width:212px;height:1.2px;background:#d0d0d0;"></div><div class="a" style="left:5px;top:1.5px;width:202px;height:11px;background:#858585;"></div><div class="a" style="left:7px;top:13px;width:1.6px;height:20px;background:#d83a20;"></div><div class="a" style="left:9.5px;top:14.5px;font-size:6px;line-height:1;color:#222;white-space:nowrap;transform:scaleX(0.85);transform-origin:0 0"><b>Multiple Choice</b></div><div class="a" style="left:5.5px;top:36px;width:107px;height:1.5px;background:#555;opacity:0.75"></div><div class="a" style="left:7px;top:56.0px;width:4px;height:1.2px;background:#999;"></div><div class="a" style="left:14px;top:56.0px;width:6px;height:1.2px;background:#999;"></div><div class="a" style="left:22px;top:56.0px;width:24px;height:1.2px;background:#888;"></div><div class="a" style="left:7px;top:62.4px;width:4px;height:1.2px;background:#999;"></div><div class="a" style="left:14px;top:62.4px;width:6px;height:1.2px;background:#999;"></div><div class="a" style="left:22px;top:62.4px;width:22px;height:1.2px;background:#888;"></div><div class="a" style="left:7px;top:68.8px;width:4px;height:1.2px;background:#999;"></div><div class="a" style="left:14px;top:68.8px;width:6px;height:1.2px;background:#999;"></div><div class="a" style="left:22px;top:68.8px;width:30px;height:1.2px;background:#888;"></div><div class="a" style="left:7px;top:75.2px;width:4px;height:1.2px;background:#999;"></div><div class="a" style="left:14px;top:75.2px;width:6px;height:1.2px;background:#999;"></div><div class="a" style="left:22px;top:75.2px;width:20px;height:1.2px;background:#888;"></div></div><!--/QP-->

<!-- properties panel -->
<div class="a" id="props" style="left:1545px;top:155px;width:493px;height:1355px;background:#f0f2f7"></div>
<!-- PROPS -->
<svg class="a" style="left:1564px;top:188px" width="28" height="20"><path d="M1.5 10 C6 3 22 3 26.5 10 C22 17 6 17 1.5 10 Z" fill="#3a3d42"/><circle cx="14" cy="10" r="4.6" fill="#eef0f5"/><circle cx="14" cy="10" r="2.6" fill="#3a3d42"/></svg>
<div class="a" style="left:1594px;top:179px;width:304px;height:37px;background:#fff;border:1px solid #a8abb0"></div>
<div class="a pt" style="left:1601px;top:187.5px">Image_24</div>
<svg class="a" style="left:1980px;top:188px" width="34" height="24"><path d="M3 8.6 H9.5 L6.25 12.5 Z" fill="#45484d"/><path d="M13.2 4.3 H29.7 M13.2 9.2 H29.7 M13.2 14.2 H29.7 M13.2 19.2 H29.7" stroke="#45484d" stroke-width="1.8"/></svg>
<div class="a" style="left:1561px;top:243.5px;font-size:19.5px;line-height:1;font-weight:bold;color:#1e1e1e">Object State</div>
<svg class="a" style="left:1980px;top:249px" width="34" height="24"><path d="M3 8.6 H9.5 L6.25 12.5 Z" fill="#45484d"/><path d="M13.2 4.3 H29.7 M13.2 9.2 H29.7 M13.2 14.2 H29.7 M13.2 19.2 H29.7" stroke="#45484d" stroke-width="1.8"/></svg>
<div class="a" style="left:1563px;top:297px;width:280px;height:37px;background:linear-gradient(#fff,#f4f5f7);border:1px solid #9a9da2"></div>
<div class="a pt" style="left:1575px;top:305px">Normal (Default)</div>
<svg class="a" style="left:1822px;top:310px" width="14" height="9"><path d="M0.5 0.5 H13.5 L7 8.5 Z" fill="#555"/></svg>
<svg class="a" style="left:1870px;top:304px" width="26" height="26"><path d="M1.6 9.5 H24.7 V15.3 H1.6 Z M10.2 0.9 H16.3 V24 H10.2 Z" fill="#2474c8"/></svg>
<svg class="a" style="left:1926px;top:301px" width="32" height="32"><circle cx="15.7" cy="15.4" r="13" fill="#c9d6e3" opacity="0.8"/><path d="M12 21 V10 L20 17 H15 Z" fill="#e3ecf5"/></svg>
<svg class="a" style="left:1988px;top:303px" width="22" height="24"><path d="M2 5 H20 M6 2.5 H16" stroke="#b9c5d1" stroke-width="2"/><path d="M4 8 H18 L17 21.5 H5 Z" fill="none" stroke="#b9c5d1" stroke-width="2"/><path d="M8 10 V20 M11 10 V20 M14 10 V20" stroke="#b9c5d1" stroke-width="1.6"/></svg>
<div class="a btn2" style="left:1668px;top:357.5px;width:243px;height:35.5px">State View</div>
<div class="a cb" style="left:1568px;top:424px"></div>
<div class="a pt" style="left:1594.5px;top:422px">Retain State on Slide Revisit</div>
<div class="a cb" style="left:1568px;top:463px"></div>
<div class="a pt" style="left:1594.5px;top:461.5px">Use as Button</div>
<div class="a cb" style="left:1568px;top:503.5px"></div>
<svg class="a" style="left:1568px;top:501px" width="22" height="22"><path d="M4 12 L8.5 17.5 L17.5 4" fill="none" stroke="#111" stroke-width="2.8"/></svg>
<div class="a pt" style="left:1594.5px;top:502px">Unlock from Fluid Box</div>
<div class="a" style="left:1545px;top:565px;width:493px;height:1.5px;background:#d6d9de"></div>
<div class="a" style="left:1637.5px;top:544.5px;width:307px;height:43.5px;background:linear-gradient(#dfe4ec,#cdd5e2);border:1.5px solid #9ea3ab"></div>
<div class="a" style="left:1641px;top:549px;width:147px;height:34.5px;background:#4b5a78"></div>
<div class="a" style="left:1641px;top:553.5px;width:147px;text-align:center;font-size:18.5px;line-height:1;color:#f5f5f5">Style</div>
<div class="a" style="left:1788px;top:556px;width:153px;text-align:center;font-size:18.5px;line-height:1;color:#222">Options</div>
<div class="a" style="left:1565px;top:617.5px;width:436px;height:38.5px;background:linear-gradient(#fff,#f5f6f8);border:1.5px solid #8f9297;border-radius:2px"></div>
<svg class="a" style="left:1586px;top:624px" width="33" height="26"><rect x="2.5" y="2.5" width="28.5" height="21.5" fill="#e6f2fc" stroke="#2f6fb0" stroke-width="2"/><path d="M4 4 H29.5 V18 L25 13 L19 19 L13 13 L4 19 Z" fill="#2a78c8"/><circle cx="16.5" cy="9" r="2.8" fill="#e6f2fc"/></svg>
<div class="a pt" style="left:1629.5px;top:625.5px">Screen Shot 2019-12-29 at 5.47.21 PM.png</div>
<svg class="a" style="left:1568px;top:676px" width="40" height="34"><path d="M14 9 H3 V30 H23 V19" fill="none" stroke="#2f5f95" stroke-width="2.4"/><path d="M8 24 L23 9" stroke="#1e3c64" stroke-width="4" stroke-linecap="round"/><path d="M20 6.5 L26.5 13" stroke="#1e3c64" stroke-width="3"/><path d="M24 8.5 L28 4.5" stroke="#1e3c64" stroke-width="5" stroke-linecap="round"/><circle cx="34" cy="13" r="1.8" fill="#1e3c64"/><circle cx="34" cy="20" r="1.8" fill="#1e3c64"/></svg>
<div class="a" style="left:1621px;top:673.5px;width:102px;height:38px;background:#fff;border:1.5px solid #8f9297;border-radius:2px"></div>
<svg class="a" style="left:1621px;top:673.5px" width="102" height="38"><path d="M6.5 31 L96 6" stroke="#e8344a" stroke-width="2"/><path d="M84.5 25 H96.5 L90.5 32 Z" fill="#555"/></svg>
<div class="a btn2" style="left:1742.5px;top:673.5px;width:258.5px;height:38.5px">Reset To Original Size</div>
<div class="a btn2" style="left:1660px;top:745.5px;width:243px;height:38.5px">Edit Image</div>
<div class="a btn2" style="left:1660px;top:801.5px;width:243px;height:38.5px;color:#b5b8bc">Fit to Stage</div>
<div class="a" style="left:1555px;top:862px;width:448px;height:1.5px;background:#c3c6cb"></div>
<svg class="a" style="left:1553px;top:883px" width="12" height="14"><path d="M1.5 1 L10.5 7 L1.5 13 Z" fill="#111"/></svg>
<div class="a" style="left:1571.5px;top:879.5px;font-size:19.1px;line-height:1;font-weight:bold;color:#111">Shadow and Reflection</div>
<svg class="a" style="left:1973px;top:881.7px" width="34" height="24"><path d="M3 8.6 H9.5 L6.25 12.5 Z" fill="#45484d"/><path d="M13.2 4.3 H29.7 M13.2 9.2 H29.7 M13.2 14.2 H29.7 M13.2 19.2 H29.7" stroke="#45484d" stroke-width="1.8"/></svg>


</body></html>
